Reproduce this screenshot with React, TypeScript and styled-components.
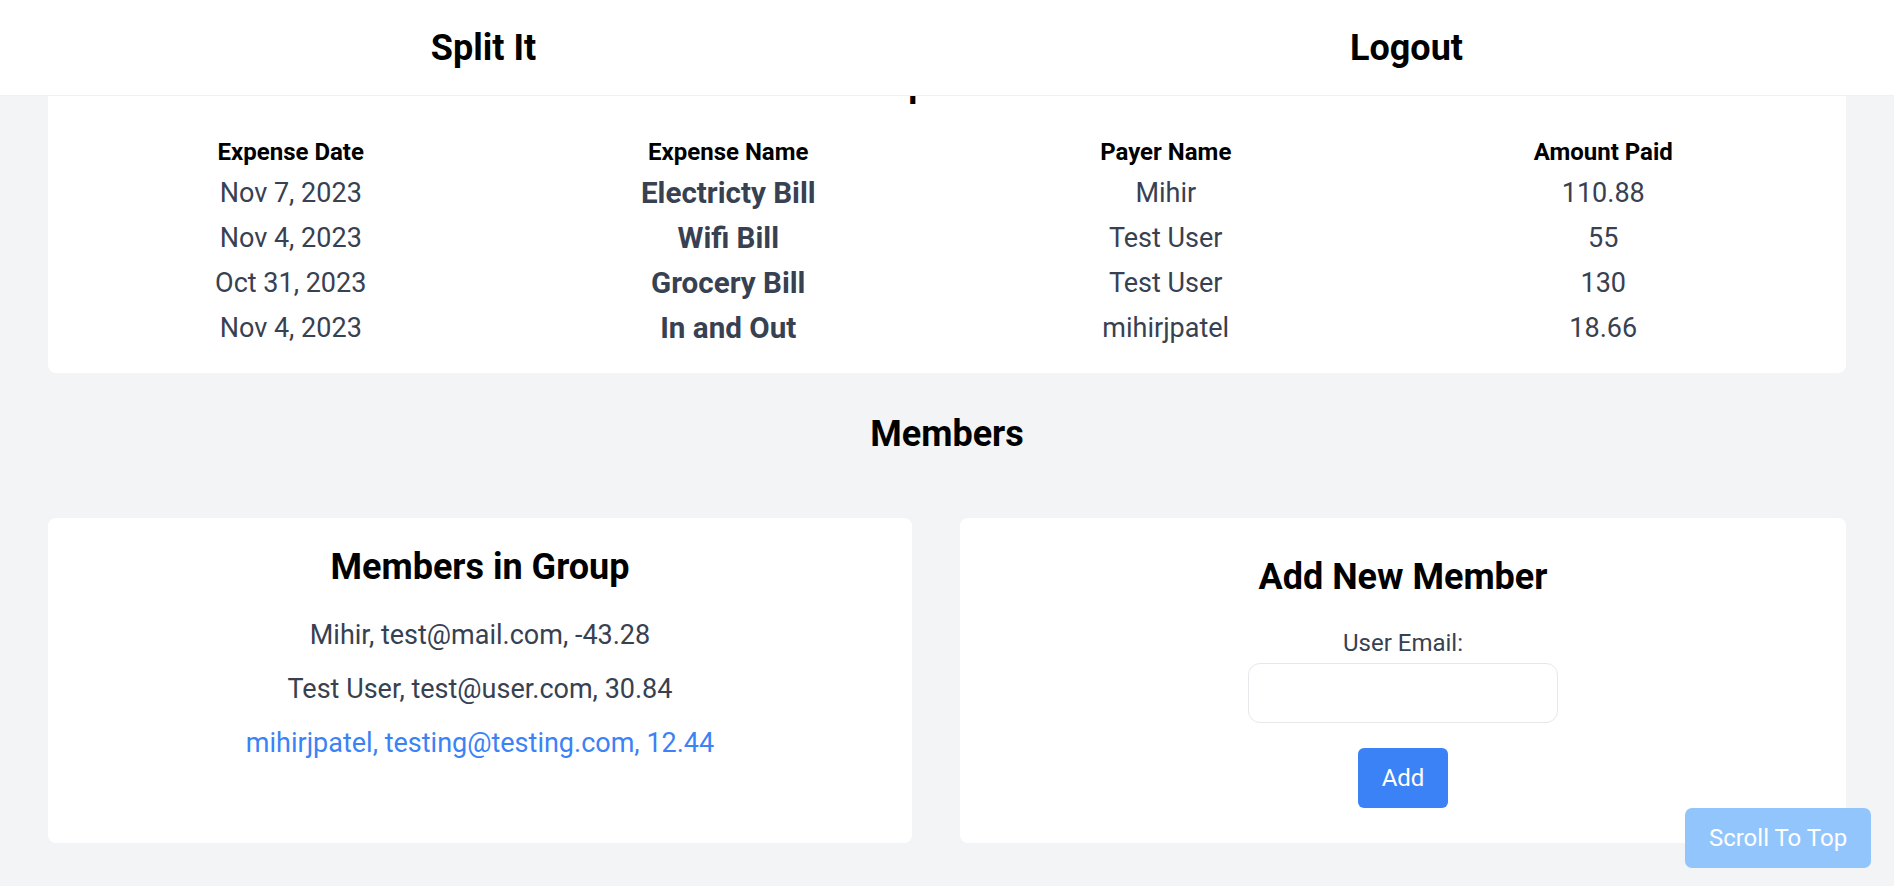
import styled, { createGlobalStyle } from 'styled-components';

const GlobalStyle = createGlobalStyle`
  body {
    margin: 0;
    background-color: #f3f4f6;
    font-family: Roboto, "Liberation Sans", Arial, sans-serif;
  }
  * {
    box-sizing: border-box;
  }
`;

// 상단 고정 헤더
const HeaderBar = styled.header`
  position: fixed;
  top: 0;
  left: 0;
  width: 100%;
  height: 96px;
  z-index: 10;
  background-color: #ffffff;
  border-bottom: 1px solid #eff0f2;
  display: grid;
  grid-template-columns: 1fr 1fr;
  align-items: center;
  padding: 0 26px 0 22px;
`;

const HeaderItem = styled.div`
  text-align: center;
  font-size: 36px;
  font-weight: 700;
  color: #000000;
  cursor: pointer;
`;

const Main = styled.main`
  padding: 40px 48px 43px;
`;

const Card = styled.section`
  background-color: #ffffff;
  border-radius: 8px;
`;

const ExpenseCard = styled(Card)`
  padding: 24px 24px 22px;
`;

const CardTitle = styled.h2<{ $mb: number }>`
  margin: 0 0 ${(p) => p.$mb}px;
  text-align: center;
  font-size: 36px;
  line-height: 40px;
  font-weight: 700;
  color: #000000;
`;

const ExpenseTable = styled.div`
  display: grid;
  grid-template-columns: repeat(4, 1fr);
  text-align: center;
`;

const HeadCell = styled.div`
  font-size: 24px;
  line-height: 37px;
  font-weight: 700;
  color: #000000;
`;

const Cell = styled.div<{ $bold?: boolean }>`
  font-size: ${(p) => (p.$bold ? '29.6px' : '27px')};
  font-weight: ${(p) => (p.$bold ? 700 : 400)};
  line-height: 45px;
  color: #374151;
`;

const SectionTitle = styled.h2`
  margin: 41px 0 64px;
  text-align: center;
  font-size: 36px;
  line-height: 40px;
  font-weight: 700;
  color: #000000;
`;

const MembersGrid = styled.div`
  display: grid;
  grid-template-columns: 864px 1fr;
  gap: 48px;
  height: 325px;
`;

const MemberCard = styled(Card)<{ $pt: number }>`
  padding: ${(p) => p.$pt}px 24px 24px;
  display: flex;
  flex-direction: column;
  align-items: center;
`;

const MemberList = styled.ul`
  list-style: none;
  margin: 0;
  padding: 0;
  display: flex;
  flex-direction: column;
  gap: 20px;
  text-align: center;
`;

const MemberItem = styled.li<{ $active?: boolean }>`
  font-size: 27px;
  line-height: 34px;
  color: ${(p) => (p.$active ? '#3b82f6' : '#374151')};
`;

const Label = styled.label`
  font-size: 24px;
  line-height: 28px;
  color: #374151;
  margin-bottom: 6px;
`;

const EmailInput = styled.input`
  width: 310px;
  height: 60px;
  border: 1px solid #e5e7eb;
  border-radius: 12px;
  padding: 0 14px;
  font-size: 22px;
  font-family: inherit;
  outline: none;
`;

const AddButton = styled.button`
  margin-top: 25px;
  height: 60px;
  padding: 0 24px;
  border: none;
  border-radius: 6px;
  background-color: #3b82f6;
  color: #ffffff;
  font-family: inherit;
  font-size: 24px;
  cursor: pointer;
`;

const ScrollTopButton = styled.button`
  position: fixed;
  right: 23px;
  bottom: 18px;
  width: 186px;
  height: 60px;
  border: none;
  border-radius: 7px;
  background-color: #93c5fd;
  color: #ffffff;
  font-family: inherit;
  font-size: 24px;
  cursor: pointer;
`;

const expenses = [
  { date: 'Nov 7, 2023', name: 'Electricty Bill', payer: 'Mihir', amount: '110.88' },
  { date: 'Nov 4, 2023', name: 'Wifi Bill', payer: 'Test User', amount: '55' },
  { date: 'Oct 31, 2023', name: 'Grocery Bill', payer: 'Test User', amount: '130' },
  { date: 'Nov 4, 2023', name: 'In and Out', payer: 'mihirjpatel', amount: '18.66' },
];

const members = [
  { name: 'Mihir', email: 'test@mail.com', balance: '-43.28' },
  { name: 'Test User', email: 'test@user.com', balance: '30.84' },
  { name: 'mihirjpatel', email: 'testing@testing.com', balance: '12.44', me: true },
];

const App = () => {
  return (
    <>
      <GlobalStyle />
      <HeaderBar>
        <HeaderItem>Split It</HeaderItem>
        <HeaderItem>Logout</HeaderItem>
      </HeaderBar>
      <Main>
        <ExpenseCard>
          <CardTitle $mb={30}>Expenses</CardTitle>
          <ExpenseTable>
            <HeadCell>Expense Date</HeadCell>
            <HeadCell>Expense Name</HeadCell>
            <HeadCell>Payer Name</HeadCell>
            <HeadCell>Amount Paid</HeadCell>
            {expenses.map((e, i) => [
              <Cell key={`d${i}`}>{e.date}</Cell>,
              <Cell key={`n${i}`} $bold>
                {e.name}
              </Cell>,
              <Cell key={`p${i}`}>{e.payer}</Cell>,
              <Cell key={`a${i}`}>{e.amount}</Cell>,
            ])}
          </ExpenseTable>
        </ExpenseCard>

        <SectionTitle>Members</SectionTitle>

        <MembersGrid>
          <MemberCard $pt={29}>
            <CardTitle $mb={31}>Members in Group</CardTitle>
            <MemberList>
              {members.map((m) => (
                <MemberItem key={m.email} $active={m.me}>
                  {m.name}, {m.email}, {m.balance}
                </MemberItem>
              ))}
            </MemberList>
          </MemberCard>
          <MemberCard $pt={39}>
            <CardTitle $mb={32}>Add New Member</CardTitle>
            <Label htmlFor="email">User Email:</Label>
            <EmailInput id="email" type="email" />
            <AddButton>Add</AddButton>
          </MemberCard>
        </MembersGrid>
      </Main>
      <ScrollTopButton>Scroll To Top</ScrollTopButton>
    </>
  );
};

export default App;
